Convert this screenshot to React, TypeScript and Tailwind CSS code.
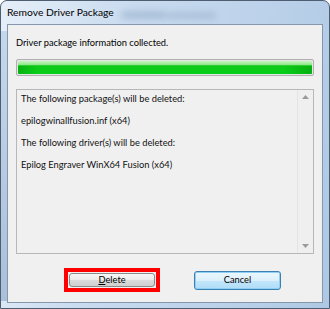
import React from "react";

const font = { fontFamily: 'Lato, "Noto Sans", sans-serif' };

export default function App() {
  return (
    <div
      className="relative w-[330px] h-[309px] flex flex-col overflow-hidden rounded-t-[7px] border border-[#4e5d6f] bg-[linear-gradient(100deg,#e6eff9_0%,#c9dbef_35%,#bcd2ea_70%,#aec8e4_100%)] text-[9.3px] text-black"
      style={font}
    >
      {/* blurred glass background spots */}
      <div className="absolute left-[120px] top-[10px] w-[45px] h-[8px] rounded-full bg-[#7f9ab8] opacity-40 blur-[3px]" />
      <div className="absolute left-[165px] top-[11px] w-[50px] h-[7px] rounded-full bg-[#8aa3bf] opacity-40 blur-[3px]" />
      <div className="absolute left-[0px] top-[30px] w-[6px] h-[270px] bg-[linear-gradient(180deg,#c5d7ec,#a9c0da)]" />
      {/* title bar */}
      <div className="relative h-[23px] flex items-center pl-[6px] leading-[15px] text-[10.3px] text-black">
        Remove Driver Package
      </div>
      {/* client area */}
      <div className="relative mx-[6px] mb-[5px] flex-1 flex flex-col border border-[#8497ad] bg-[#f0f0f0] pl-[8px] pr-[7px]">
        <div className="mt-[10px] h-[15px] leading-[15px] text-[9.3px]">Driver package information collected.</div>
        <div className="mt-[9px] h-[17px] w-[298px] rounded-[2px] border border-[#b0b0b0] bg-[#e6e6e6] p-px">
          <div className="h-full w-full rounded-[1px] bg-[linear-gradient(180deg,#c8f5c3_0%,#8fe58a_30%,#0fca16_36%,#05cf1a_100%)] relative">
            <div className="absolute right-0 top-[5px] bottom-0 w-[28px] bg-[linear-gradient(90deg,rgba(0,120,0,0),rgba(0,120,0,0.35))]" />
            <div className="absolute left-0 top-[5px] bottom-0 w-[20px] bg-[linear-gradient(90deg,rgba(0,120,0,0.3),rgba(0,120,0,0))]" />
          </div>
        </div>
        <div className="mt-[13px] h-[165px] w-[298px] border border-[#b7b7b7] bg-[#f0f0f0] flex">
          <div className="flex-1 flex flex-col gap-[7px] pl-[4px] pt-[1px] text-[9.3px] leading-[15px] text-[#111]">
            <div>The following package(s) will be deleted:</div>
            <div>epilogwinallfusion.inf (x64)</div>
            <div>The following driver(s) will be deleted:</div>
            <div>Epilog Engraver WinX64 Fusion (x64)</div>
          </div>
          <div className="w-[16px] flex flex-col justify-between items-center border-l border-[#e4e4e4] bg-[#efefef] py-[5px]">
            <svg width="7" height="4" viewBox="0 0 7 4"><path d="M0 4 L3.5 0 L7 4 Z" fill="#9a9a9a" /></svg>
            <svg width="7" height="4" viewBox="0 0 7 4"><path d="M0 0 L3.5 4 L7 0 Z" fill="#9a9a9a" /></svg>
          </div>
        </div>
        <div className="mt-[14px] h-[24px] flex items-center">
          <div className="ml-[48px] w-[96px] h-[24px] border-[4px] border-[#ff0000] p-px">
            <div className="h-full w-full rounded-[3px] border border-[#8a8a8a] bg-[linear-gradient(180deg,#f6f6f6_0%,#ebebeb_50%,#dbdbdb_52%,#cfcfcf_100%)] flex items-center justify-center text-[9.3px] leading-none">
              <span><span className="underline">D</span>elete</span>
            </div>
          </div>
          <div className="ml-[34px] w-[87px] h-[19px] rounded-[3px] border border-[#3c7fb1] shadow-[inset_0_0_0_1px_#8fd0f5] bg-[linear-gradient(180deg,#ecf7fd_0%,#dcf0fb_50%,#c2e6fb_52%,#b0ddf7_100%)] flex items-center justify-center text-[9.3px] leading-none">
            Cancel
          </div>
        </div>
      </div>
    </div>
  );
}
